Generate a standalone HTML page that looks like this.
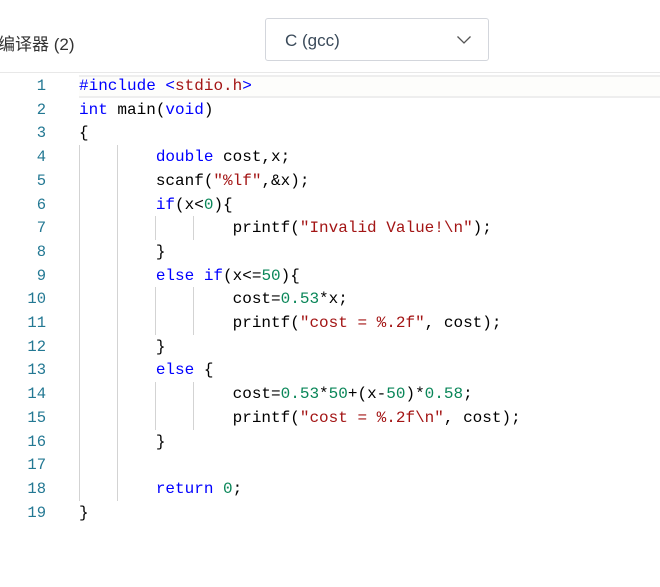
<!DOCTYPE html>
<html><head><meta charset="utf-8"><style>
html,body{margin:0;padding:0;background:#fff;width:660px;height:587px;overflow:hidden;position:relative}
.title{position:absolute;left:-2px;top:30px;font:17px "Liberation Sans","Noto Sans CJK SC",sans-serif;color:#333}
.sel{position:absolute;left:265px;top:18px;width:224px;height:43px;border:1px solid #d3d6dc;border-radius:3px;box-sizing:border-box}
.sel span{position:absolute;left:19px;top:12px;font:17px "Liberation Sans",sans-serif;color:#3a4a5a}
.sel svg{position:absolute;left:190px;top:16px}
.topline{position:absolute;left:0;top:72px;width:660px;height:1px;background:#e8e8e8}
.cur{position:absolute;left:79px;top:75px;width:581px;height:19px;border-top:2px solid #eeeeee;border-bottom:2px solid #eeeeee;background:#fdfdfb}
.ln{position:absolute;left:0;width:46px;text-align:right;font:15.5px "Liberation Mono",monospace;color:#237893;line-height:24px}
.cl{position:absolute;left:79px;font:16px "Liberation Mono",monospace;color:#000;white-space:pre;line-height:24px}
.k{color:#0000ff}.s{color:#a31515}.n{color:#098658}
.g{position:absolute;width:1px;background:#d3d3d3}
#c{position:absolute;left:0;top:1px;width:660px;height:587px}
</style></head><body>
<div class="title">编译器 (2)</div>
<div class="sel"><span>C (gcc)</span><svg width="16" height="10" viewBox="0 0 16 10"><path d="M1.5 1.5 L8 8 L14.5 1.5" fill="none" stroke="#555" stroke-width="1.3"/></svg></div>
<div class="topline"></div>
<div class="cur"></div>
<div id="c">
<div class="g" style="left:79px;top:144px;height:356px"></div>
<div class="g" style="left:117px;top:144px;height:356px"></div>
<div class="g" style="left:155px;top:215px;height:24px"></div>
<div class="g" style="left:193px;top:215px;height:24px"></div>
<div class="g" style="left:155px;top:286px;height:48px"></div>
<div class="g" style="left:193px;top:286px;height:48px"></div>
<div class="g" style="left:155px;top:381px;height:48px"></div>
<div class="g" style="left:193px;top:381px;height:48px"></div>

<div class="ln" style="top:73px">1</div><div class="cl" style="top:73px"><span class="k">#include</span> <span class="k">&lt;</span><span class="s">stdio.h</span><span class="k">&gt;</span></div>
<div class="ln" style="top:96.7px">2</div><div class="cl" style="top:96.7px"><span class="k">int</span> main(<span class="k">void</span>)</div>
<div class="ln" style="top:120.4px">3</div><div class="cl" style="top:120.4px">{</div>
<div class="ln" style="top:144.1px">4</div><div class="cl" style="top:144.1px">        <span class="k">double</span> cost,x;</div>
<div class="ln" style="top:167.8px">5</div><div class="cl" style="top:167.8px">        scanf(<span class="s">"%lf"</span>,&amp;x);</div>
<div class="ln" style="top:191.5px">6</div><div class="cl" style="top:191.5px">        <span class="k">if</span>(x&lt;<span class="n">0</span>){</div>
<div class="ln" style="top:215.2px">7</div><div class="cl" style="top:215.2px">                printf(<span class="s">"Invalid Value!\n"</span>);</div>
<div class="ln" style="top:238.9px">8</div><div class="cl" style="top:238.9px">        }</div>
<div class="ln" style="top:262.6px">9</div><div class="cl" style="top:262.6px">        <span class="k">else</span> <span class="k">if</span>(x&lt;=<span class="n">50</span>){</div>
<div class="ln" style="top:286.3px">10</div><div class="cl" style="top:286.3px">                cost=<span class="n">0.53</span>*x;</div>
<div class="ln" style="top:310px">11</div><div class="cl" style="top:310px">                printf(<span class="s">"cost = %.2f"</span>, cost);</div>
<div class="ln" style="top:333.7px">12</div><div class="cl" style="top:333.7px">        }</div>
<div class="ln" style="top:357.4px">13</div><div class="cl" style="top:357.4px">        <span class="k">else</span> {</div>
<div class="ln" style="top:381.1px">14</div><div class="cl" style="top:381.1px">                cost=<span class="n">0.53</span>*<span class="n">50</span>+(x-<span class="n">50</span>)*<span class="n">0.58</span>;</div>
<div class="ln" style="top:404.8px">15</div><div class="cl" style="top:404.8px">                printf(<span class="s">"cost = %.2f\n"</span>, cost);</div>
<div class="ln" style="top:428.5px">16</div><div class="cl" style="top:428.5px">        }</div>
<div class="ln" style="top:452.2px">17</div><div class="cl" style="top:452.2px"></div>
<div class="ln" style="top:475.9px">18</div><div class="cl" style="top:475.9px">        <span class="k">return</span> <span class="n">0</span>;</div>
<div class="ln" style="top:499.6px">19</div><div class="cl" style="top:499.6px">}</div>
</div>
</body></html>
